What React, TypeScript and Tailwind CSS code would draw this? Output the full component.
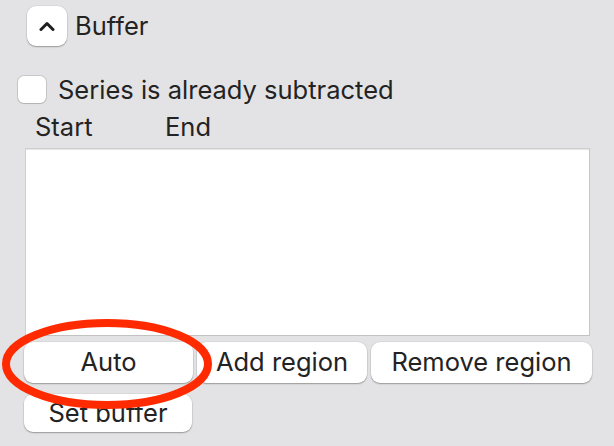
import React from "react";

const font = { fontFamily: "Inter, 'Liberation Sans', sans-serif" };

function MacButton({ label, className }: { label: string; className: string }) {
  return (
    <button
      className={`flex items-center justify-center rounded-[9px] bg-white text-[25.5px] text-[#232323] shadow-[0_1px_1.5px_rgba(0,0,0,0.3),0_0_0_0.5px_rgba(0,0,0,0.08)] ${className}`}
    >
      {label}
    </button>
  );
}

export default function App() {
  return (
    <div className="relative w-[614px] h-[446px] overflow-hidden bg-[#e3e3e5] text-[#232323]" style={font}>
      {/* section header */}
      <div className="flex items-center gap-[8px] pl-[27px] pt-[6px]">
        <button className="flex h-[40px] w-[40px] items-center justify-center rounded-[9px] bg-white shadow-[0_1px_1.5px_rgba(0,0,0,0.3),0_0_0_0.5px_rgba(0,0,0,0.08)]">
          <svg width="16" height="10" viewBox="0 0 16 10">
            <path d="M2 8.5 L8 2.5 L14 8.5" fill="none" stroke="#1f1f1f" strokeWidth="3" strokeLinecap="round" strokeLinejoin="round" />
          </svg>
        </button>
        <span className="text-[25.5px] leading-none">Buffer</span>
      </div>

      {/* checkbox */}
      <div className="mt-[30px] flex items-center gap-[12px] pl-[18px]">
        <div className="h-[27px] w-[28px] rounded-[6px] bg-white shadow-[0_0_0_1px_rgba(0,0,0,0.12),0_1px_1px_rgba(0,0,0,0.1)]" />
        <span className="text-[25.5px] leading-none">Series is already subtracted</span>
      </div>

      {/* column headers */}
      <div className="mt-[9px] flex h-[30px] items-center pl-[35px] text-[25.5px] leading-none">
        <span className="w-[130px]">Start</span>
        <span>End</span>
      </div>

      {/* list */}
      <div className="ml-[25px] mt-[6px] h-[188px] w-[565px] border border-[#cfcfcf] border-b-[#c2c2c2] border-r-[#c6c6c6] bg-white shadow-[inset_0_1px_0_#e6e6e6]" />

      {/* buttons */}
      <div className="mt-[6px] flex gap-[4px] pl-[24px]">
        <MacButton label="Auto" className="h-[41px] w-[169px]" />
        <MacButton label="Add region" className="h-[41px] w-[170px]" />
        <MacButton label="Remove region" className="h-[41px] w-[221px]" />
      </div>
      <div className="mt-[11px] pl-[24px]">
        <MacButton label="Set buffer" className="h-[38px] w-[168px]" />
      </div>

      {/* annotation */}
      <svg className="absolute left-0 top-0 pointer-events-none" width="614" height="446">
        <ellipse cx="107" cy="364" rx="101" ry="41" fill="none" stroke="#ff2a00" strokeWidth="8" />
      </svg>
    </div>
  );
}
